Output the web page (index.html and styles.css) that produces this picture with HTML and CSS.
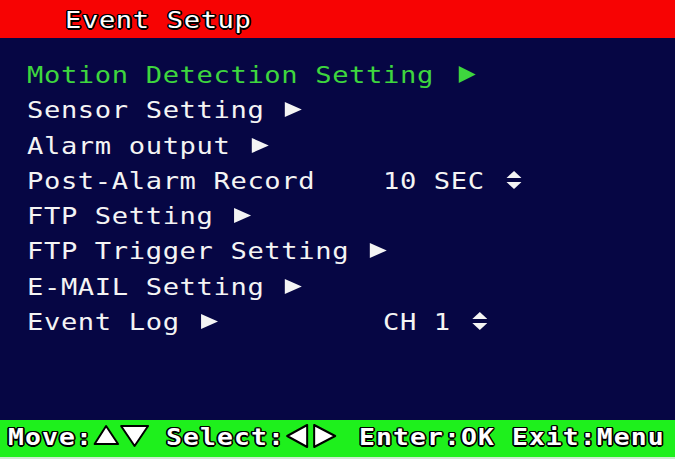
FILE: index.html
```html
<!DOCTYPE html>
<html>
<head>
<meta charset="utf-8">
<link rel="stylesheet" href="styles.css">
</head>
<body>
<div class="screen">
  <div class="title"><span class="title-text">Event Setup</span></div>
  <div class="menu">
    <div class="row active">Motion Detection Setting <svg class="tri" width="22" height="18" viewBox="0 0 26 18" preserveAspectRatio="none"><polygon points="8,1 25,9.5 8,18"/></svg></div>
    <div class="row">Sensor Setting <svg class="tri" width="20.3" height="17" viewBox="0 0 24 17" preserveAspectRatio="none"><polygon points="4,1 21,8.5 4,16"/></svg></div>
    <div class="row">Alarm output <svg class="tri" width="20.3" height="17" viewBox="0 0 24 17" preserveAspectRatio="none"><polygon points="4,1 21,8.5 4,16"/></svg></div>
    <div class="row row-val"><span>Post-Alarm Record</span><span>10 SEC <svg class="ud" width="17" height="19" viewBox="0 0 20 19" preserveAspectRatio="none"><polygon points="12.5,0 20,7 5,7"/><polygon points="5,11 20,11 12.5,18"/></svg></span></div>
    <div class="row">FTP Setting <svg class="tri" width="20.3" height="17" viewBox="0 0 24 17" preserveAspectRatio="none"><polygon points="4,1 21,8.5 4,16"/></svg></div>
    <div class="row">FTP Trigger Setting <svg class="tri" width="20.3" height="17" viewBox="0 0 24 17" preserveAspectRatio="none"><polygon points="4,1 21,8.5 4,16"/></svg></div>
    <div class="row">E-MAIL Setting <svg class="tri" width="20.3" height="17" viewBox="0 0 24 17" preserveAspectRatio="none"><polygon points="4,1 21,8.5 4,16"/></svg></div>
    <div class="row row-val"><span>Event Log <svg class="tri" width="20.3" height="17" viewBox="0 0 24 17" preserveAspectRatio="none"><polygon points="4,1 21,8.5 4,16"/></svg></span><span>CH 1 <svg class="ud" width="17" height="19" viewBox="0 0 20 19" preserveAspectRatio="none"><polygon points="12.5,0 20,7 5,7"/><polygon points="5,11 20,11 12.5,18"/></svg></span></div>
  </div>
  <div class="footer"><div class="footer-text"><span>Move:</span><svg class="keys" width="48.7" height="24" viewBox="0 0 56 24" preserveAspectRatio="none"><polygon points="1.5,20 13,2 25,20"/><polygon points="28,2 55,2 41.5,22"/></svg><span> Select:</span><svg class="keys" width="49.6" height="24" viewBox="0 0 57 24" preserveAspectRatio="none"><polygon points="22,1 22,23 2,12"/><polygon points="29,1 29,23 50,12"/></svg><span> Enter:OK Exit:Menu</span></div></div>
</div>
</body>
</html>
```
FILE: styles.css
```css
html, body {
  margin: 0;
  padding: 0;
}
body {
  background: #060644;
  font-family: "DejaVu Sans Mono", "Liberation Mono", monospace;
}
.screen {
  width: 675px;
  height: 459px;
  display: flex;
  flex-direction: column;
  background: #060644;
  overflow: hidden;
}
.title {
  height: 36px;
  flex: none;
  padding-top: 2px;
  line-height: 36px;
  background: #f70303;
  color: #ffffff;
  font-size: 23px;
  padding-left: 65px;
  white-space: pre;
}
.title-text {
  display: inline-block;
  letter-spacing: 0.52px;
  transform: scaleX(1.18);
  transform-origin: 0 0;
  text-shadow: -1.5px 0 0 #000, 1.5px 0 0 #000, 0 -1.5px 0 #000, 0 1.5px 0 #000,
    -1px -1px 0 #000, 1px 1px 0 #000, -1px 1px 0 #000, 1px -1px 0 #000;
}
.menu {
  flex: 1;
  padding-top: 20px;
  padding-left: 22.9px;
  color: #f4f4f4;
  font-size: 23px;
  letter-spacing: 0.52px;
  line-height: 35.3px;
  transform: scaleX(1.18);
  transform-origin: 0 0;
}
.row {
  white-space: pre;
  height: 35.3px;
}
.row.active {
  color: #3ed63e;
}
.row-val {
  display: grid;
  grid-template-columns: 301.7px auto;
}
.tri, .ud {
  fill: currentColor;
  vertical-align: 0;
}
.ud {
  vertical-align: -1px;
}
.footer {
  height: 37px;
  flex: none;
  background: #1ef01c;
  border-bottom: 2px solid #cdebcd;
  padding-left: 8px;
}
.footer-text {
  line-height: 35px;
  color: #ffffff;
  font-size: 23px;
  font-weight: bold;
  letter-spacing: 0.93px;
  white-space: pre;
  transform: scaleX(1.15);
  transform-origin: 0 0;
  text-shadow: -1.5px 0 0 #000, 1.5px 0 0 #000, 0 -1.5px 0 #000, 0 1.5px 0 #000,
    -1px -1px 0 #000, 1px 1px 0 #000, -1px 1px 0 #000, 1px -1px 0 #000;
}
.keys {
  vertical-align: -3px;
  fill: #ffffff;
  stroke: #000000;
  stroke-width: 2;
  stroke-linejoin: round;
}
```
